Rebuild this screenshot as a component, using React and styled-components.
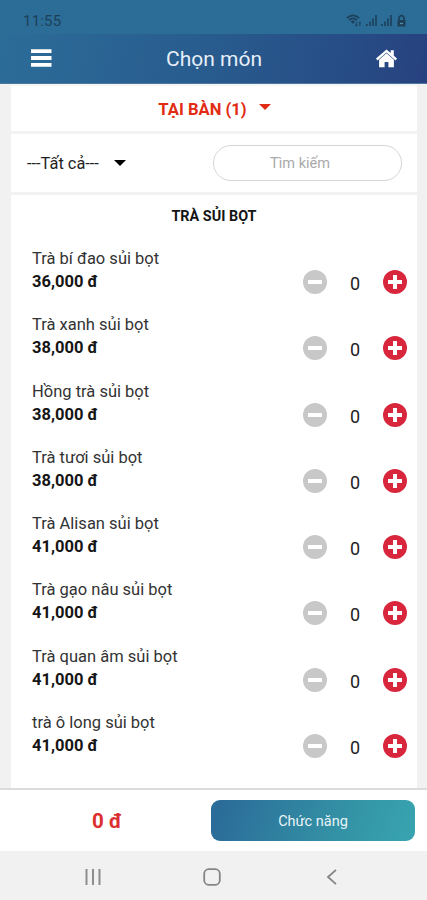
import React from 'react'
import styled, { createGlobalStyle } from 'styled-components'

const GlobalStyle = createGlobalStyle`
* { box-sizing:border-box; }
body {
margin:0;
font-family:Roboto, "Noto Sans", sans-serif;
color:#222;
background:#f1f1f1;
}
button, input { font-family:inherit; padding:0; border:none; background:none; }
`;
const Container = styled.div`
width:427px;
height:900px;
display:flex;
flex-direction:column;
overflow:hidden;
`;
const StatusBar = styled.div`
height:34px;
padding:9px 20px 0 23px;
display:flex;
justify-content:space-between;
background:#2c6d98;
color:#1c4059;
`;
const Clock = styled.span`
font-size:15px;
line-height:25px;
letter-spacing:0.2px;
`;
const StatusIcons = styled.svg`
width:61px;
height:14px;
margin-top:5px;
`;
const Header = styled.header`
height:50px;
padding:0 30px 1px 31px;
display:flex;
align-items:center;
justify-content:space-between;
background:linear-gradient(100deg, #2c6c99 0%, #285d8f 45%, #274d86 80%, #27417f 100%);
border-bottom:1px solid #4e779e;
`;
const PageTitle = styled.h1`
margin:2px 0 0;
font-size:21px;
font-weight:400;
color:#e6eff8;
`;
const IconButton = styled.button`
display:flex;
`;
const Content = styled.main`
height:704px;
padding:0 10px 0 11px;
background:#f1f1f1;
`;
const Card = styled.div`
height:100%;
background:#fff;
border-top:2px solid #f3f5f7;
`;
const TableRow = styled.div`
height:48px;
padding:0 0 0 1px;
display:flex;
justify-content:center;
align-items:center;
gap:12px;
border-bottom:3px solid #f2f2f2;
`;
const TableName = styled.span`
font-size:16.6px;
font-weight:700;
line-height:20px;
padding-top:2px;
color:#e22b13;
`;
const Caret = styled.span`
border-left:6px solid transparent;
border-right:6px solid transparent;
border-top:6px solid ${(props) => props.color};
margin-top:${(props) => props.shift || 0}px;
`;
const Filters = styled.div`
height:61px;
padding:0 15px 0 16px;
display:flex;
align-items:center;
justify-content:space-between;
border-bottom:3px solid #f2f2f2;
`;
const Category = styled.div`
display:flex;
align-items:center;
gap:15px;
font-size:16.4px;
`;
const Search = styled.input`
width:189px;
height:36px;
border:1.5px solid #d5d5d5;
border-radius:18px;
padding-right:15px;
text-align:center;
font-size:14.5px;
&::placeholder { color:#a9a9a9; opacity:1; }
`;
const GroupTitle = styled.h2`
margin:0;
padding-top:12px;
height:51px;
font-size:14.4px;
line-height:20px;
font-weight:700;
text-align:center;
color:#151515;
`;
const Item = styled.div`
height:66.3px;
padding:0 10px 0 21px;
display:flex;
justify-content:space-between;
`;
const ItemName = styled.div`
padding-top:1px;
font-size:16.5px;
line-height:23px;
color:#333;
`;
const ItemPrice = styled.div`
font-size:16.5px;
line-height:23px;
font-weight:700;
color:#151515;
`;
const Counter = styled.div`
height:24px;
margin-top:24px;
display:flex;
align-items:center;
`;
const Amount = styled.span`
width:56px;
padding-top:3px;
text-align:center;
font-size:18px;
`;
const RoundButton = styled.button`
width:24px;
height:24px;
border-radius:50%;
display:flex;
align-items:center;
justify-content:center;
background:${(props) => props.color};
`;
const Footer = styled.footer`
height:63px;
padding:0 12px 0 0;
display:flex;
align-items:center;
background:#fff;
border-top:2px solid #dcdcdc;
`;
const Total = styled.div`
width:211px;
padding:1px 0 0 3px;
text-align:center;
font-size:20.6px;
font-weight:700;
color:#dc2f2f;
`;
const ActionButton = styled.button`
flex:1;
height:41px;
padding-top:2px;
border-radius:9px;
font-size:14.5px;
color:#e8f4f8;
background:linear-gradient(110deg, #2b6c99 5%, #3391a5 62%, #38a5b0 100%);
`;
const SystemNav = styled.nav`
height:49px;
padding:2px 36px 0 33px;
display:flex;
align-items:center;
justify-content:space-between;
background:#f1f1f1;
`;
const NavButton = styled.button`
width:119px;
display:flex;
justify-content:center;
`;

const items = [
  { name: 'Trà bí đao sủi bọt', price: '36,000 đ' },
  { name: 'Trà xanh sủi bọt', price: '38,000 đ' },
  { name: 'Hồng trà sủi bọt', price: '38,000 đ' },
  { name: 'Trà tươi sủi bọt', price: '38,000 đ' },
  { name: 'Trà Alisan sủi bọt', price: '41,000 đ' },
  { name: 'Trà gạo nâu sủi bọt', price: '41,000 đ' },
  { name: 'Trà quan âm sủi bọt', price: '41,000 đ' },
  { name: 'trà ô long sủi bọt', price: '41,000 đ' },
]

const MenuItem = ({ name, price }) => (
  <Item>
    <div>
      <ItemName>{name}</ItemName>
      <ItemPrice>{price}</ItemPrice>
    </div>
    <Counter>
      <RoundButton color="#c8c8c8" aria-label="Remove">
        <svg width="24" height="24"><path d="M5 12H19" stroke="#fff" strokeWidth="4" /></svg>
      </RoundButton>
      <Amount>0</Amount>
      <RoundButton color="#d8263c" aria-label="Add">
        <svg width="24" height="24"><path d="M5 12H19M12 5V19" stroke="#fff" strokeWidth="4" /></svg>
      </RoundButton>
    </Counter>
  </Item>
)

const App = () => {
  return (
    <Container>
      <GlobalStyle />
      <StatusBar>
        <Clock>11:55</Clock>
        <StatusIcons viewBox="0 0 61 14" fill="none" stroke="currentColor">
          <path d="M0.8 4.2Q7 -1.6 13.2 4.2M3 6.2Q7 2.6 11 6.2" strokeWidth="1.7" />
          <path d="M4.8 7.3Q7 5.6 9 7.3L7 10Z" fill="currentColor" stroke="none" />
          <path d="M10.3 8V12M9 10.8L10.3 12.2L11.6 10.8M13.8 12V8M12.7 9.2L13.8 8L15 9.2" strokeWidth="1" />
          <path d="M20.8 12V10M24 12V7.5M27 12V4.5M30 12V1M35.8 12V10M39 12V7.5M42 12V4.5M45 12V1" strokeWidth="1.6" />
          <rect x="51.5" y="6" width="8" height="6.5" fill="currentColor" stroke="none" />
          <path d="M53 6V3.5Q55.5 -0.8 58 3.5V6" strokeWidth="1.7" />
          <path d="M54 9.5H57" stroke="#5f8ca5" strokeWidth="1.3" />
        </StatusIcons>
      </StatusBar>
      <Header>
        <IconButton aria-label="Menu">
          <svg width="21" height="18"><path d="M0 2.2H20.5M0 9H20.5M0 15.8H20.5" stroke="#fff" strokeWidth="3.8" /></svg>
        </IconButton>
        <PageTitle>Chọn món</PageTitle>
        <IconButton aria-label="Home">
          <svg width="21" height="19" viewBox="0 0 21 19" fill="#fff">
            <path d="M10.5 0.4L14.7 4V1.3H17.8V6.7L21 9.6L19.5 11.4L10.5 3.6L1.5 11.4L0 9.6Z" />
            <path d="M10.5 4.3L17.9 10.8V18.3H12.4V12.9H8.6V18.3H3.1V10.8Z" />
          </svg>
        </IconButton>
      </Header>
      <Content>
        <Card>
          <TableRow>
            <TableName>TẠI BÀN (1)</TableName>
            <Caret color="#e22b13" shift={-4} />
          </TableRow>
          <Filters>
            <Category>
              <span>---Tất cả---</span>
              <Caret color="#000" />
            </Category>
            <Search placeholder="Tìm kiếm" />
          </Filters>
          <GroupTitle>TRÀ SỦI BỌT</GroupTitle>
          {items.map((item) => (
            <MenuItem key={item.name} {...item} />
          ))}
        </Card>
      </Content>
      <Footer>
        <Total>0 đ</Total>
        <ActionButton>Chức năng</ActionButton>
      </Footer>
      <SystemNav>
        <NavButton aria-label="Recents">
          <svg width="18" height="18"><path d="M2.5 1V17M9 1V17M15.5 1V17" stroke="#8d8d8d" strokeWidth="2" /></svg>
        </NavButton>
        <NavButton aria-label="Home screen">
          <svg width="18" height="18"><rect x="1.2" y="1.2" width="15.6" height="15.6" rx="4.5" fill="none" stroke="#858585" strokeWidth="1.8" /></svg>
        </NavButton>
        <NavButton aria-label="Back">
          <svg width="18" height="18"><path d="M13 1.8L5 9L13 16.2" fill="none" stroke="#858585" strokeWidth="1.8" /></svg>
        </NavButton>
      </SystemNav>
    </Container>
  )
}

export default App
